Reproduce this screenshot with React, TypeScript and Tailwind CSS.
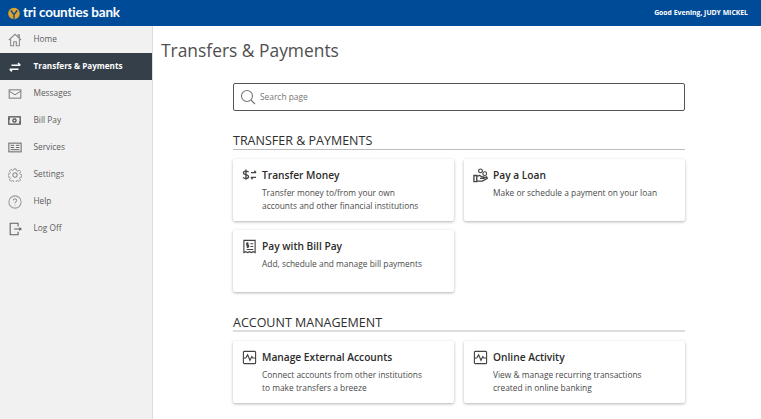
import type { ReactNode } from 'react';

const navStroke = '#7a7a7a';

function NavSvg({ children, color = navStroke }: { children: ReactNode; color?: string }) {
  return (
    <svg width="14" height="14" viewBox="0 0 16 16" fill="none" stroke={color} strokeWidth="1.200">
      {children}
    </svg>
  );
}

const navItems: { label: string; active?: boolean; icon: ReactNode }[] = [
  {
    label: 'Home',
    icon: (
      <NavSvg color="#8a8a8a">
        <path d="M1 8 8 1.500 15 8M3 7v7.500h3.500V10h3v4.500H13V7M11.500 4V2H13v3.500" />
      </NavSvg>
    ),
  },
  {
    label: 'Transfers & Payments',
    active: true,
    icon: (
      <NavSvg color="#ffffff">
        <path d="M4 6h10M11.500 3.500 14 6M12 10.500H2M4.500 13 2 10.500" strokeWidth="1.700" />
      </NavSvg>
    ),
  },
  {
    label: 'Messages',
    icon: (
      <svg width="14" height="10" viewBox="0 0 16 12" fill="none" stroke={navStroke} strokeWidth="1.200">
        <rect x="1" y="1" width="14" height="10" />
        <path d="M1 2.500 8 7l7-4.500" />
      </svg>
    ),
  },
  {
    label: 'Bill Pay',
    icon: (
      <svg width="13" height="9" viewBox="0 0 16 11" fill="none" stroke="#4a4a4a" strokeWidth="1.500">
        <rect x="1" y="1" width="14" height="9" />
        <circle cx="8" cy="5.500" r="2" strokeWidth="1.500" />
        <path d="M1 3.500h1.500M13.500 7.500H15" />
      </svg>
    ),
  },
  {
    label: 'Services',
    icon: (
      <svg width="14" height="11" viewBox="0 0 16 12" fill="none" stroke="#5f5f5f" strokeWidth="1.100">
        <rect x="1" y="1" width="14" height="10" />
        <path d="M3 3.500h4M3 6h4M3 8.500h10M9 3.500h4M9 6h4" />
      </svg>
    ),
  },
  {
    label: 'Settings',
    icon: (
      <NavSvg color="#8a8a8a">
        <circle cx="8" cy="8" r="2.500" />
        <path d="M6.800 1h2.400l.4 2 1.300.6 1.800-1.100 1.700 1.700-1.100 1.800.6 1.300 2 .4v2.400l-2 .4-.6 1.300 1.100 1.800-1.700 1.700-1.800-1.100-1.300.6-.4 2H6.800l-.4-2-1.300-.6-1.800 1.100-1.700-1.700 1.100-1.800-.6-1.300-2-.4V6.800l2-.4.6-1.300-1.100-1.800 1.700-1.700 1.800 1.100 1.300-.6z" strokeWidth="1" />
      </NavSvg>
    ),
  },
  {
    label: 'Help',
    icon: (
      <NavSvg color="#9a9a9a">
        <circle cx="8" cy="8" r="7" />
        <path d="M6 6.300C6 5 7 4.400 8 4.400s2 .7 2 1.800c0 1.500-2 1.500-2 3.200M8 11v1" />
      </NavSvg>
    ),
  },
  {
    label: 'Log Off',
    icon: (
      <NavSvg color="#5f5f5f">
        <path d="M11.500 5V1.500h-9v13h9V11M7 8h8M13 6.500 15 8l-2 1.500" />
      </NavSvg>
    ),
  },
];

function CardSvg({ children }: { children: ReactNode }) {
  return (
    <svg width="15" height="15" viewBox="0 0 16 16" fill="none" stroke="#444444" strokeWidth="1.200" className="shrink-0">
      {children}
    </svg>
  );
}

const activityIcon = (
  <CardSvg>
    <rect x="1.500" y="1.500" width="13" height="13" rx="1" />
    <path d="M1.500 8.500H4l2-3.500 2.500 6 2-4 1 1.500h3" />
  </CardSvg>
);

function Card({ icon, title, lines }: { icon: ReactNode; title: string; lines: string[] }) {
  return (
    <div className="h-[62px] rounded-[2px] bg-white pr-2 pt-[8px] pl-[8px] shadow-[0_1px_3px_rgba(0,0,0,0.3)]">
      <div className="flex items-center gap-[5px]">
        <span className="flex w-[16px] justify-center">{icon}</span>
        <span className="text-[10.200px] leading-[16px] font-semibold text-[#2b2b2b]">{title}</span>
      </div>
      <div className="mt-[3px] pl-[21px] text-[8.400px] leading-[13px] text-[#4a4a4a]">
        {lines.map((line) => (
          <div key={line}>{line}</div>
        ))}
      </div>
    </div>
  );
}

function SectionTitle({ children, soft }: { children: ReactNode; soft?: boolean }) {
  return (
    <div
      className={
        soft
          ? 'border-b-2 border-[#dddddd] text-[12.500px] leading-[15px] font-medium text-[#2e2e2e]'
          : 'border-b border-[#bdbdbd] text-[12.500px] leading-[16px] font-medium text-[#2e2e2e]'
      }
    >
      {children}
    </div>
  );
}

export default function App() {
  return (
    <div className="flex h-[419px] w-[761px] flex-col overflow-hidden bg-white font-['Open_Sans',sans-serif]">
      {/* Header */}
      <header className="flex h-[26px] shrink-0 items-center justify-between bg-[#004b97] pr-[13px] pl-[8px]">
        <div className="flex items-center gap-[3px]">
          <svg width="12" height="13" viewBox="0 0 12 13">
            <circle cx="6" cy="6.500" r="5.800" fill="#e0a22b" />
            <path d="M2.800 3.500 6 7.500l3.200-4M6 7.500V12" stroke="#004b97" strokeWidth="1.300" fill="none" />
          </svg>
          <span className="font-['Lato',sans-serif] text-[13.500px] leading-none font-bold tracking-[-0.2px] text-white">tri counties bank</span>
        </div>
        <span className="text-[6.850px] font-bold text-white">Good Evening, JUDY MICKEL</span>
      </header>

      <div className="flex min-h-0 flex-1">
        {/* Sidebar */}
        <nav className="w-[153px] shrink-0 border-r border-[#dcdcdc] bg-[#f1f1f1]">
          {navItems.map((item) => (
            <div
              key={item.label}
              className={
                item.active
                  ? 'flex h-[27px] items-center bg-[#353f49] pl-[8px] text-white'
                  : 'flex h-[27px] items-center pl-[8px] text-[#5c5c5c]'
              }
            >
              <span className="flex w-[16px] justify-start">{item.icon}</span>
              <span className={item.active ? 'ml-[9.500px] text-[8.150px] font-bold' : 'ml-[9.500px] text-[8.300px]'}>
                {item.label}
              </span>
            </div>
          ))}
        </nav>

        {/* Main */}
        <main className="min-w-0 flex-1 pt-[10px] pl-[8px]">
          <h1 className="text-[17.400px] leading-[28px] font-normal text-[#4f4f4f]">Transfers & Payments</h1>
          <div className="mt-[19px] ml-[72px] w-[452px]">
            <div className="flex h-[28px] items-center gap-[4px] rounded-[2px] border border-[#555555] pl-[6px]">
              <svg width="16" height="16" viewBox="0 0 16 16" fill="none" stroke="#777777" strokeWidth="1.100">
                <circle cx="7" cy="7" r="5.500" />
                <path d="m11 11 4 4" />
              </svg>
              <span className="text-[8.400px] text-[#777777]">Search page</span>
            </div>

            <div className="mt-[22px]">
              <SectionTitle>TRANSFER & PAYMENTS</SectionTitle>
            </div>
            <div className="mt-[9px] grid grid-cols-2 gap-x-[10px] gap-y-[9px]">
              <Card
                title="Transfer Money"
                lines={['Transfer money to/from your own', 'accounts and other financial institutions']}
                icon={
                  <CardSvg>
                    <path d="M7 4.500C6.500 3 1.500 2.800 1.500 5.200 1.500 7.800 7 6.500 7 9.300c0 2.500-5 2.200-5.700.5M4.200 1.500v11" strokeWidth="1.400" />
                    <path d="M9.500 5H15M13.200 3l1.800 2M15 10H9.500M11.300 12l-1.800-2" strokeWidth="1.400" />
                  </CardSvg>
                }
              />
              <Card
                title="Pay a Loan"
                lines={['Make or schedule a payment on your loan']}
                icon={
                  <CardSvg>
                    <circle cx="8" cy="3" r="2" />
                    <circle cx="12.500" cy="6" r="2" />
                    <path d="M1 8h3v6.500H1zM4 9l3-1 2.500 1.500h2V11H7.500M11 11l3.500-1.500.8 1.500-5.300 3H4" strokeWidth="1.400" />
                  </CardSvg>
                }
              />
              <Card
                title="Pay with Bill Pay"
                lines={['Add, schedule and manage bill payments']}
                icon={
                  <CardSvg>
                    <path d="M2 1.500h12v13l-2-1-2 1-2-1-2 1-2-1-2 1z" />
                    <path d="M7 4.500H5v2h2v2H4.800M6 3.500v6M9 5h3M9 8h3M5 11.200h7" />
                  </CardSvg>
                }
              />
            </div>

            <div className="mt-[23px]">
              <SectionTitle soft>ACCOUNT MANAGEMENT</SectionTitle>
            </div>
            <div className="mt-[9px] grid grid-cols-2 gap-x-[10px]">
              <Card
                title="Manage External Accounts"
                lines={['Connect accounts from other institutions', 'to make transfers a breeze']}
                icon={activityIcon}
              />
              <Card
                title="Online Activity"
                lines={['View & manage recurring transactions', 'created in online banking']}
                icon={activityIcon}
              />
            </div>
          </div>
        </main>
      </div>
    </div>
  );
}
